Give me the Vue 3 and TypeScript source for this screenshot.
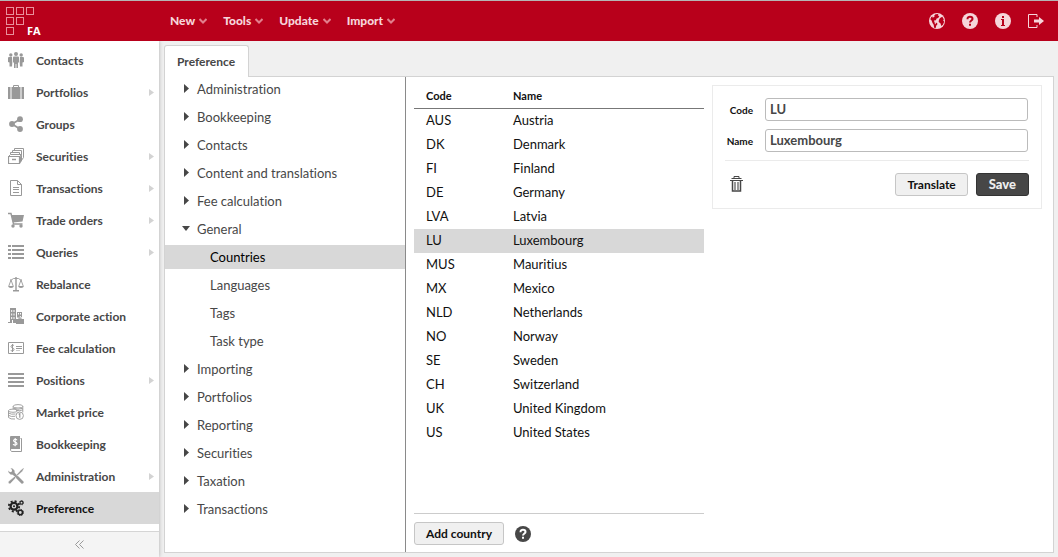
<script setup lang="ts">
import { ref } from 'vue'

interface NavItem {
  label: string
  icon: string
  sub?: boolean
}

interface TreeNode {
  label: string
  children?: string[]
}

interface Country {
  code: string
  name: string
}

const menus: string[] = ['New', 'Tools', 'Update', 'Import']

const navItems: NavItem[] = [
  { label: 'Contacts', icon: 'contacts' },
  { label: 'Portfolios', icon: 'portfolios', sub: true },
  { label: 'Groups', icon: 'groups' },
  { label: 'Securities', icon: 'securities', sub: true },
  { label: 'Transactions', icon: 'transactions', sub: true },
  { label: 'Trade orders', icon: 'cart', sub: true },
  { label: 'Queries', icon: 'queries', sub: true },
  { label: 'Rebalance', icon: 'scales' },
  { label: 'Corporate action', icon: 'corporate' },
  { label: 'Fee calculation', icon: 'fee' },
  { label: 'Positions', icon: 'positions', sub: true },
  { label: 'Market price', icon: 'coins' },
  { label: 'Bookkeeping', icon: 'book' },
  { label: 'Administration', icon: 'tools', sub: true },
  { label: 'Preference', icon: 'gears' },
]

const tree: TreeNode[] = [
  { label: 'Administration' },
  { label: 'Bookkeeping' },
  { label: 'Contacts' },
  { label: 'Content and translations' },
  { label: 'Fee calculation' },
  { label: 'General', children: ['Countries', 'Languages', 'Tags', 'Task type'] },
  { label: 'Importing' },
  { label: 'Portfolios' },
  { label: 'Reporting' },
  { label: 'Securities' },
  { label: 'Taxation' },
  { label: 'Transactions' },
]

const countries: Country[] = [
  { code: 'AUS', name: 'Austria' },
  { code: 'DK', name: 'Denmark' },
  { code: 'FI', name: 'Finland' },
  { code: 'DE', name: 'Germany' },
  { code: 'LVA', name: 'Latvia' },
  { code: 'LU', name: 'Luxembourg' },
  { code: 'MUS', name: 'Mauritius' },
  { code: 'MX', name: 'Mexico' },
  { code: 'NLD', name: 'Netherlands' },
  { code: 'NO', name: 'Norway' },
  { code: 'SE', name: 'Sweden' },
  { code: 'CH', name: 'Switzerland' },
  { code: 'UK', name: 'United Kingdom' },
  { code: 'US', name: 'United States' },
]

const activeNav = ref('Preference')
const activeLeaf = ref('Countries')
const code = ref('LU')
const name = ref('Luxembourg')
const selected = ref('LU')

function select(country: Country): void {
  selected.value = country.code
  code.value = country.code
  name.value = country.name
}
</script>

<template>
  <div class="app">
    <header class="topbar">
      <div class="brand">
        <svg class="logo" width="38" height="32" viewBox="0 0 38 32" fill="none" stroke="#e9909c" aria-hidden="true">
          <rect x="0.5" y="2.5" width="7" height="7" /><rect x="10.5" y="2.5" width="7" height="7" /><rect x="20.5" y="2.5" width="7" height="7" />
          <rect x="0.5" y="12.5" width="7" height="7" /><rect x="10.5" y="12.5" width="7" height="7" />
          <rect x="0.5" y="22.5" width="7" height="7" />
          <text class="logo-text" x="21" y="30" stroke="none" fill="#fff">FA</text>
        </svg>
      </div>
      <nav class="menus">
        <button v-for="m in menus" :key="m" type="button" class="menu">
          {{ m }}
          <svg width="8" height="6" viewBox="0 0 8 6" fill="none" stroke="#e27f8d" stroke-width="2" aria-hidden="true"><path d="M.5 1L4 4.500 7.500 1" /></svg>
        </button>
      </nav>
      <div class="actions">
        <button type="button" aria-label="Language">
          <svg width="16" height="16" viewBox="0 0 16 16"><circle cx="8" cy="8" r="8" fill="#f6d5da" /><path d="M6.500 1.200L9.400 1l-.6 1.400 1.600.7-1.200 1.800-1.600.5-.7 1.800-1.900.2.4 1.600 2.200.7 1 1.400-1.400 1.600-.5 2.300-1.600-.3-.4-3L3.500 10 2.600 7.500 1.300 6.300 2.300 4l2-.6zM11 5l2.300-1.300 1.500 2.600-.6 1.200 1 1.300-1.300 3-1.700 1.200-.6-2.400-1.900-1.500.2-2.200z" fill="#b8001b" /><path d="M3.200 4.500l1.700-.3 1-1.500-1.700.2zM5.500 8.800l2 .7-1.500 2z" fill="#f6d5da" /></svg>
        </button>
        <button type="button" aria-label="Help">
          <svg width="16" height="16" viewBox="0 0 16 16"><circle cx="8" cy="8" r="8" fill="#f6d5da" /><path d="M5.500 6.200C5.500 4.400 6.600 3.800 8 3.800s2.500.8 2.500 2.100C10.500 7.500 8 7.600 8 9.600" fill="none" stroke="#b8001b" stroke-width="2" /><path d="M7 10.700h2v2H7z" fill="#b8001b" /></svg>
        </button>
        <button type="button" aria-label="Information">
          <svg width="16" height="16" viewBox="0 0 16 16"><circle cx="8" cy="8" r="8" fill="#f6d5da" /><path d="M7 3h2v2H7zM6 6h3v6h1v1H6v-1h1V7H6z" fill="#b8001b" /></svg>
        </button>
        <button type="button" aria-label="Log out">
          <svg width="16" height="16" viewBox="0 0 16 16"><path d="M9 4V1.500H.5v13H9V12" fill="none" stroke="#f6d5da" /><path d="M6 6.500h5V4l5 4-5 4V9.500H6z" fill="#f6d5da" /></svg>
        </button>
      </div>
    </header>

    <div class="body">
      <aside class="sidebar">
        <nav class="nav">
          <a v-for="item in navItems" :key="item.label" href="#" class="nav-item" :class="{ active: item.label === activeNav }" @click.prevent="activeNav = item.label">
            <svg class="nav-icon" width="16" height="16" viewBox="0 0 16 16" fill="currentColor" aria-hidden="true">
              <g v-if="item.icon === 'contacts'">
                <circle cx="2.800" cy="3" r="1.700" /><circle cx="8" cy="2" r="2" /><circle cx="13.200" cy="3" r="1.700" />
                <path d="M0 6q0-1 1-1h3l.3 5.500-.3 4H1.500v-4L0 10zM16 6q0-1-1-1h-3l-.3 5.500.3 4h2.500v-4L16 10zM5 5.500Q5 4.500 6 4.500h4q1 0 1 1V10l-1 1v5H8.400v-4h-.8v4H6v-5l-1-1z" />
              </g>
              <g v-else-if="item.icon === 'portfolios'">
                <path d="M0 3h2.500v12H0zM13.500 3H16v12h-2.500zM3.500 3h9v12h-9z" />
                <path d="M5.500 3V1.500h5V3" fill="none" stroke="currentColor" />
              </g>
              <g v-else-if="item.icon === 'groups'">
                <circle cx="12" cy="3.200" r="2.900" /><circle cx="4" cy="8" r="2.900" /><circle cx="12" cy="13" r="2.900" />
                <path d="M12 3.200L4 8l8 5" fill="none" stroke="currentColor" stroke-width="1.800" />
              </g>
              <g v-else-if="item.icon === 'securities'" fill="none" stroke="currentColor">
                <path d="M.5 8.500h11v7H.5z" stroke-width="1.200" /><path d="M.5 8.500l2-2h11.300l-2.300 2M2.500 6V4.500h9V6M4.500 4.500v-2h9v4M6.500 2.500v-2h9v9l-3.500 5" />
                <path d="M12 8.500l2-2v6l-2 3z" fill="currentColor" stroke="none" /><path d="M4 11.500h4" stroke-width="1.500" />
              </g>
              <g v-else-if="item.icon === 'transactions'" fill="none" stroke="currentColor">
                <path d="M2.500.5h7l4 4v11h-11z" /><path d="M9.500.5v4h4M5 7.500h6M5 9.500h6M5 12.500h6" />
              </g>
              <g v-else-if="item.icon === 'cart'">
                <path d="M3.500 3H16l-1.500 6.500L5 10.500z" /><path d="M0 1.500h3l2.500 10.500h9" fill="none" stroke="currentColor" stroke-width="1.400" />
                <circle cx="5" cy="14" r="1.700" /><circle cx="13" cy="14" r="1.700" />
              </g>
              <path v-else-if="item.icon === 'queries'" d="M0 1h3v2H0zM4 1h12v2H4zM0 5h3v2H0zM4 5h12v2H4zM0 9h3v2H0zM4 9h12v2H4zM0 13h3v2H0zM4 13h12v2H4z" />
              <g v-else-if="item.icon === 'scales'">
                <path d="M7.300 1h1.400v13H7.300zM5 14h6v1.500H5zM0 10h6q-.5 2-3 2t-3-2zM10 10h6q-.5 2-3 2t-3-2z" />
                <path d="M2 4q2 0 3.500-1.500h5Q12 4 14 4M3 4L.8 10M3 4l2.200 6M13 4l-2.200 6M13 4l2.200 6" fill="none" stroke="currentColor" stroke-width=".9" />
              </g>
              <g v-else-if="item.icon === 'corporate'">
                <path fill-rule="evenodd" d="M2 0h6v14h1v1H5v-3H4v3H0v-1h2zM3.200 2v2h1V2zm2.300 0v2h1V2zM3.200 5.500v2h1v-2zm2.300 0v2h1v-2zM3.200 9v2h1V9zm2.300 0v2h1V9zM9 4h5v5h-1.200V8h-1v1.500H9zm1 1v1.500h1V5zm2 0v1.500h1V5z" />
                <path fill-rule="evenodd" d="M8 11h2.500V9.500h3V11H16v5H8zm3.500 0h1v-.5h-1z" />
              </g>
              <g v-else-if="item.icon === 'fee'" fill="none" stroke="currentColor">
                <path d="M.5 2.500h15v11H.5zM8 6.500h6M8 8.500h6" /><path d="M8 10.500h4" opacity=".5" />
                <path d="M6 5.800q-.5-.8-1.500-.8T3 6.400q0 1.100 1.500 1.500T6 9.500 4.500 11 3 10.200M4.500 4v8" />
              </g>
              <path v-else-if="item.icon === 'positions'" d="M0 1h16v2H0zM0 5h16v2H0zM0 9h16v2H0zM0 13h16v2H0z" />
              <g v-else-if="item.icon === 'coins'" fill="none" stroke="currentColor" stroke-width=".9">
                <ellipse cx="10" cy="2.300" rx="4.800" ry="1.700" /><path d="M5.200 2.300v3M14.800 2.300v6M5.500 4.200q4.500 2.200 9.300 0M8 6.500q3.500.6 6.800-.6" />
                <ellipse cx="5" cy="6.700" rx="4.500" ry="1.600" /><path d="M.5 6.700v6.800q2 2 6.500 1.500M.5 9q2.500 1.800 7 1M.5 11.300q2.500 1.800 6.500 1" />
                <circle cx="11.700" cy="11.700" r="3.700" fill="#fff" /><path d="M10.600 10.300l1.200-.6v4" stroke-width="1.200" />
              </g>
              <g v-else-if="item.icon === 'book'">
                <path d="M2 1q0-1 1-1h9v13H2z" /><path d="M12.500 2.500h1v13h-10q-1-.5-1-2.500" fill="none" stroke="currentColor" />
                <path d="M9 4.200Q8.500 3.300 7.200 3.300T5.500 4.600q0 1.100 1.700 1.500T9 7.700 7.200 9 5.300 8M7.200 2v8.300" fill="none" stroke="#fff" stroke-width="1.100" />
              </g>
              <g v-else-if="item.icon === 'tools'">
                <path d="M2.500.3l2 .2 2 2 .2 2.300L15.500 13.500q.5 1-.3 1.800t-1.800.3L4.800 6.800 2.500 6.500.6 4.500.2 2.500 2 4.200l1.700-.5.4-1.700z" />
                <path d="M15.500 0l.5.600-1.500 2.700-5 4.500-1-1 4.500-5zM6.500 8.500l1.300 1.300-5 5.500q-1.200 1-2.100 0t0-2z" stroke="#fff" stroke-width=".5" />
              </g>
              <g v-else>
                <g fill="none" stroke="currentColor">
                  <circle cx="6" cy="6.300" r="3.400" stroke-width="2.200" /><circle cx="6" cy="6.300" r="5.200" stroke-width="1.800" stroke-dasharray="2.050 2.034" />
                  <circle cx="13.500" cy="2.700" r="1.500" stroke-width="1.200" /><circle cx="13.500" cy="2.700" r="2.200" stroke-width=".8" stroke-dasharray=".86 .86" />
                  <circle cx="12.300" cy="12.500" r="2.200" stroke-width="1.600" /><circle cx="12.300" cy="12.500" r="3.200" stroke-width="1" stroke-dasharray="1.250 1.260" />
                </g>
                <circle cx="6" cy="6.300" r="1" />
              </g>
            </svg>
            <span>{{ item.label }}</span>
            <svg v-if="item.sub" class="sub" width="5" height="7" viewBox="0 0 5 7" aria-hidden="true"><path d="M0 0l5 3.500-5 3.500z" fill="#d3d3d3" /></svg>
          </a>
        </nav>
        <button type="button" class="collapse" aria-label="Collapse menu">
          <svg width="9" height="9" viewBox="0 0 9 9" fill="none" stroke="#999"><path d="M4.500.5l-4 4 4 4M8.500.5l-4 4 4 4" /></svg>
        </button>
      </aside>

      <main class="main">
        <div class="tabs" role="tablist">
          <button type="button" class="tab" role="tab" aria-selected="true">Preference</button>
        </div>
        <div class="panel">
          <ul class="tree">
            <li v-for="node in tree" :key="node.label">
              <button type="button" class="tree-row" :aria-expanded="!!node.children">
                <svg class="arrow" width="8" height="9" viewBox="0 0 8 9" fill="#474747" aria-hidden="true">
                  <path v-if="node.children" d="M0 2h8L4 7z" /><path v-else d="M2 0l5 4.500-5 4.500z" />
                </svg>
                {{ node.label }}
              </button>
              <ul v-if="node.children" class="leaves">
                <li v-for="leaf in node.children" :key="leaf">
                  <button type="button" class="tree-row leaf" :class="{ active: leaf === activeLeaf }" @click="activeLeaf = leaf">{{ leaf }}</button>
                </li>
              </ul>
            </li>
          </ul>

          <section class="list">
            <table>
              <thead>
                <tr><th scope="col" class="col-code">Code</th><th scope="col">Name</th></tr>
              </thead>
              <tbody>
                <tr v-for="c in countries" :key="c.code" :class="{ active: c.code === selected }" @click="select(c)">
                  <td>{{ c.code }}</td><td>{{ c.name }}</td>
                </tr>
              </tbody>
            </table>
            <footer class="list-footer">
              <button type="button" class="btn">Add country</button>
              <button type="button" class="icon-btn" aria-label="Help">
                <svg width="16" height="16" viewBox="0 0 16 16"><circle cx="8" cy="8" r="8" fill="#474747" /><path d="M5.500 6.200C5.500 4.400 6.600 3.800 8 3.800s2.500.8 2.500 2.100C10.500 7.500 8 7.600 8 9.600" fill="none" stroke="#fff" stroke-width="2" /><path d="M7 10.700h2v2H7z" fill="#fff" /></svg>
              </button>
            </footer>
          </section>

          <form class="card" @submit.prevent>
            <div class="field">
              <label for="country-code">Code</label>
              <input id="country-code" v-model="code" type="text">
            </div>
            <div class="field">
              <label for="country-name">Name</label>
              <input id="country-name" v-model="name" type="text">
            </div>
            <div class="form-actions">
              <button type="button" class="icon-btn trash" aria-label="Delete">
                <svg width="13" height="16" viewBox="0 0 13 16" fill="none" stroke="#474747"><path d="M4 2V.5h5V2" /><path d="M1.500 2.500h10" /><path d="M0 4.500h13" /><path d="M2.500 5v10h8V5" stroke-width="1.500" /><path d="M5 6v8M8 6v8" stroke="#777" stroke-width="1.500" /></svg>
              </button>
              <button type="button" class="btn">Translate</button>
              <button type="submit" class="btn save">Save</button>
            </div>
          </form>
        </div>
      </main>
    </div>
  </div>
</template>

<style>
body {
  margin: 0;
}
</style>

<style scoped>
.app {
  display: flex;
  flex-direction: column;
  min-height: 100vh;
  background: #f0f0f0;
  color: #474747;
  font-family: Lato, "Open Sans", sans-serif;
  font-size: 13px;
  font-variant-ligatures: none;
}
.app *,
.app {
  box-sizing: border-box;
}
button {
  margin: 0;
  padding: 0;
  border: 0;
  background: none;
  color: inherit;
  font: inherit;
  font-variant-ligatures: none;
  cursor: pointer;
}
svg {
  display: block;
  flex: none;
}
ul {
  list-style: none;
  margin: 0;
  padding: 0;
}

.topbar {
  display: flex;
  align-items: center;
  height: 41px;
  border-top: 1px solid #b5b5b5;
  background: #b8001b;
}
.brand {
  width: 170px;
  padding-left: 6px;
}
.logo-text {
  font: 700 11px "Open Sans", sans-serif;
}
.menus {
  display: flex;
  gap: 16px;
}
.menu {
  display: flex;
  align-items: center;
  gap: 4px;
  padding-bottom: 1px;
  color: #f6d5da;
  font-size: 12px;
  font-weight: 900;
}
.actions {
  display: flex;
  gap: 17px;
  margin-left: auto;
  padding-right: 14px;
}

.body {
  display: flex;
  flex: 1;
}
.sidebar {
  display: flex;
  flex-direction: column;
  width: 159px;
  background: #fff;
  box-shadow: 0 0 4px #aaa;
  clip-path: inset(0 -6px 0 0);
}
.nav {
  flex: 1;
  padding: 3px 0 7px;
}
.nav-item {
  display: flex;
  align-items: center;
  gap: 12px;
  height: 32px;
  padding: 0 5px 0 8px;
  color: #474747;
  font-size: 12px;
  font-weight: 700;
  text-decoration: none;
}
.nav-icon {
  color: #999;
}
.nav-item.active {
  background: #d8d8d8;
  color: #111;
}
.nav-item.active .nav-icon {
  color: #222;
}
.sub {
  margin-left: auto;
}
.collapse {
  display: flex;
  align-items: center;
  justify-content: center;
  height: 26px;
  border-top: 1px solid #d5d5d5;
  background: #f4f4f4;
}

.main {
  display: flex;
  flex: 1;
  flex-direction: column;
  min-width: 0;
  padding: 4px 4px 4px 5px;
}
.tabs {
  display: flex;
}
.tab {
  z-index: 1;
  height: 32px;
  margin-bottom: -1px;
  padding: 0 13px 1px 12px;
  border: 1px solid #d3d3d3;
  border-bottom: 0;
  border-radius: 3px 3px 0 0;
  background: #fff;
  font-size: 12px;
  font-weight: 700;
}
.panel {
  display: flex;
  flex: 1;
  align-items: stretch;
  border: 1px solid #d3d3d3;
  background: #fff;
}
.tree {
  width: 241px;
  border-right: 1px solid #8a8a8a;
}
.tree-row {
  display: flex;
  align-items: center;
  gap: 7px;
  width: 100%;
  height: 24px;
  margin-bottom: 4px;
  padding-left: 17px;
  font-size: 13px;
  text-align: left;
}
.arrow {
  margin-bottom: 2px;
}
.leaf {
  padding-left: 45px;
}
.leaf.active {
  background: #d8d8d8;
  color: #000;
}

.list {
  display: flex;
  flex-direction: column;
  width: 290px;
  margin: 0 8px;
}
table {
  width: 100%;
  border-collapse: separate;
  border-spacing: 0;
  color: #111;
}
th {
  height: 32px;
  padding: 6px 0 0 12px;
  border-bottom: 1px solid #777;
  font-size: 11px;
  font-weight: 700;
  text-align: left;
}
.col-code {
  width: 87px;
}
td {
  height: 24px;
  padding: 0 0 2px 12px;
}
tbody tr.active {
  background: #d8d8d8;
}
.list-footer {
  display: flex;
  align-items: center;
  gap: 11px;
  margin-top: auto;
  padding: 8px 0 7px;
  border-top: 1px solid #ccc;
}

.card {
  flex: 1;
  align-self: flex-start;
  min-width: 0;
  margin: 8px 11px 0 0;
  padding: 12px;
  border: 1px solid #ebebeb;
}
.field {
  display: flex;
  align-items: center;
  gap: 12px;
  margin-bottom: 8px;
}
.field label {
  width: 28px;
  color: #111;
  font-size: 10px;
  font-weight: 700;
  text-align: right;
}
.field input {
  flex: 1;
  min-width: 0;
  height: 23px;
  margin: 0 1px 0 0;
  padding: 0 4px 1px;
  border: 1px solid #bbb;
  border-radius: 3px;
  color: #474747;
  font: 700 13px Lato, sans-serif;
}
.form-actions {
  display: flex;
  align-items: center;
  gap: 8px;
  padding-top: 12px;
  border-top: 1px solid #ebebeb;
}
.trash {
  margin: 0 auto 1px 5px;
}
.btn {
  height: 23px;
  padding: 0 11px;
  border: 1px solid #c6c6c6;
  border-radius: 3px;
  background: #f0f0f0;
  color: #111;
  font-size: 12px;
  font-weight: 700;
}
.save {
  padding: 0 12px 1px;
  border-color: #333;
  background: #474747;
  color: #eee;
  font-size: 13px;
  font-weight: 900;
}
</style>
